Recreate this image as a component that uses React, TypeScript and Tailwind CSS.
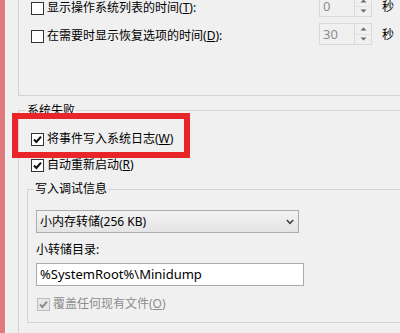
import React from "react";

const font = "font-['Noto_Sans','Noto_Sans_CJK_SC',sans-serif]";

function Check({ checked, disabled }: { checked?: boolean; disabled?: boolean }) {
  return (
    <span
      className={
        disabled
          ? "flex h-[13px] w-[13px] shrink-0 items-center justify-center border border-[#bcbcbc] bg-[#e6e6e6]"
          : "flex h-[13px] w-[13px] shrink-0 items-center justify-center border border-[#333333] bg-white"
      }
    >
      {checked && (
        <svg width="9" height="9" viewBox="0 0 9 9">
          <path
            d="M1 4.6 L3.4 7 L8 1.6"
            fill="none"
            stroke={disabled ? "#8d8d8d" : "#111"}
            strokeWidth="2.1"
          />
        </svg>
      )}
    </span>
  );
}

function Spinner({ value }: { value: string }) {
  return (
    <div className="flex h-[22px] w-[53px] border border-[#d9d9d9] bg-[#f0f0f0]">
      <div className="flex-1 pl-[3px] text-[13px] leading-[20px] text-[#8d8d8d]">{value}</div>
      <div className="flex w-[17px] flex-col border-l border-[#d9d9d9]">
        <div className="flex flex-1 items-center justify-center border-b border-[#e2e2e2]">
          <svg width="7" height="4" viewBox="0 0 7 4">
            <path d="M0.5 3.5 L3.5 0.5 L6.5 3.5 Z" fill="#6a6a6a" />
          </svg>
        </div>
        <div className="flex flex-1 items-center justify-center">
          <svg width="7" height="4" viewBox="0 0 7 4">
            <path d="M0.5 0.5 L3.5 3.5 L6.5 0.5 Z" fill="#6a6a6a" />
          </svg>
        </div>
      </div>
    </div>
  );
}

function TimeRow({ label, hot, value, top }: { label: string; hot: string; value: string; top: string }) {
  return (
    <div className={`flex h-[22px] items-center pl-[12px] ${top}`}>
      <span className="mt-[4px]">
        <Check />
      </span>
      <span className="ml-[3px] mt-[4px] w-[272px] leading-[16px]">
        {label}(<span className="underline">{hot}</span>):
      </span>
      <Spinner value={value} />
      <span className="ml-[10px] mt-[1px] leading-[16px]">秒</span>
    </div>
  );
}

export default function App() {
  return (
    <div className={`flex h-[333px] w-[400px] overflow-hidden bg-[#f0f0f0] text-[12px] text-black ${font}`}>
      {/* side strip */}
      <div className="w-[5px] shrink-0 bg-[#e07a7c]" />
      <div className="w-[1px] shrink-0 bg-[#f7f7f7]" />

      <div className="flex flex-1 flex-col">
        {/* startup group (top cut off) */}
        <div className="ml-[12px] flex h-[96px] shrink-0 flex-col border-b border-l border-[#d3d3d3]">
          <TimeRow label="显示操作系统列表的时间" hot="T" value="0" top="-mt-[5px]" />
          <TimeRow label="在需要时显示恢复选项的时间" hot="D" value="30" top="mt-[6px]" />
        </div>

        {/* system failure */}
        <div className="relative ml-[12px] mt-[14px] flex flex-1 flex-col border-l border-t border-[#d3d3d3]">
          <span className="absolute -top-[8px] left-[7px] bg-[#f0f0f0] px-[1px] leading-[16px]">系统失败</span>

          <div className="relative z-10 -ml-[7px] mt-[2px] flex h-[45px] w-[178px] items-center border-[6px] border-[#e8262a] pl-[13px] pt-[7px]">
            <Check checked />
            <span className="ml-[3px] leading-[16px]">
              将事件写入系统日志(<span className="underline">W</span>)
            </span>
          </div>

          <div className="flex h-[14px] items-center pl-[12px]">
            <Check checked />
            <span className="ml-[3px] leading-[16px]">
              自动重新启动(<span className="underline">R</span>)
            </span>
          </div>

          {/* debug info */}
          <div className="relative ml-[8px] mt-[17px] flex h-[134px] flex-col border-b border-l border-t border-[#d3d3d3]">
            <span className="absolute -top-[9px] left-[6px] bg-[#f0f0f0] px-[1px] leading-[16px]">写入调试信息</span>

            <div className="ml-[8px] mt-[20px] flex h-[23px] w-[263px] items-center border border-[#acacac] bg-gradient-to-b from-[#f3f3f3] to-[#e4e4e4] pl-[3px] pr-[4px]">
              <span className="flex-1 leading-[16px]">小内存转储(256 KB)</span>
              <svg width="8" height="6" viewBox="0 0 8 6">
                <path d="M0.8 1 L4 4.4 L7.2 1" fill="none" stroke="#444" strokeWidth="1.6" />
              </svg>
            </div>

            <div className="ml-[8px] mt-[9px] leading-[16px]">小转储目录:</div>

            <div className="ml-[8px] mt-[5px] flex h-[23px] w-[268px] items-center border border-[#ababab] bg-white pl-[3px] text-[13px]">
              %SystemRoot%\Minidump
            </div>

            <div className="ml-[9px] mt-[10px] flex h-[16px] items-center text-[#8d8d8d]">
              <Check checked disabled />
              <span className="ml-[3px] leading-[16px]">
                覆盖任何现有文件(<span className="underline">O</span>)
              </span>
            </div>
          </div>
        </div>
      </div>
    </div>
  );
}
